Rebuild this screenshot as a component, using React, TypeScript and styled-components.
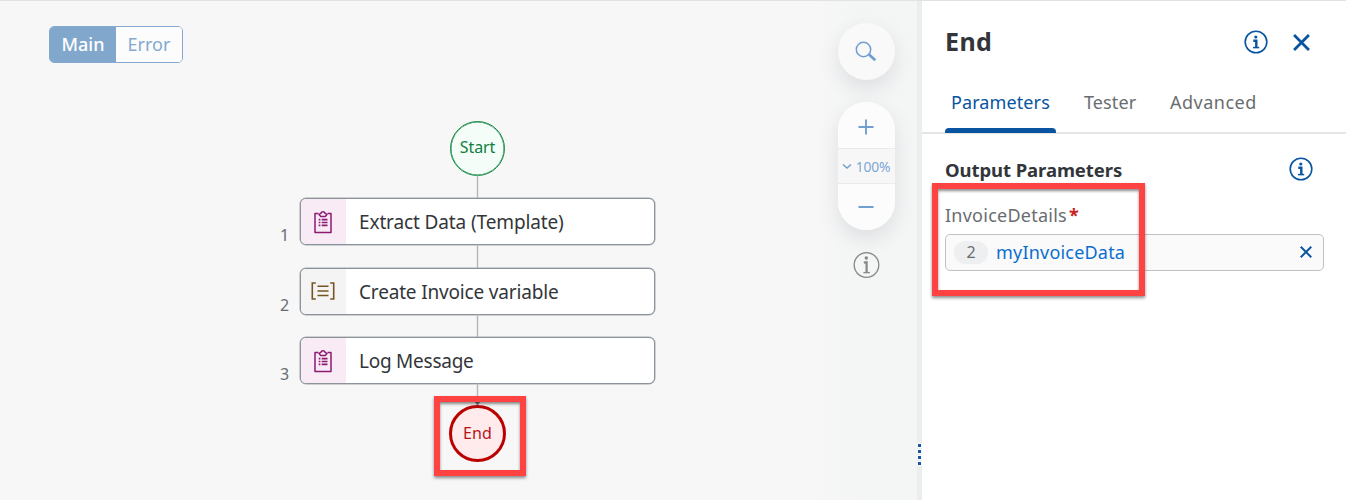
import React from "react";
import styled, { createGlobalStyle } from "styled-components";

const GlobalStyle = createGlobalStyle`
  * { box-sizing: border-box; }
  body { margin: 0; font-family: "Noto Sans", "Open Sans", sans-serif; }
`;

const Page = styled.div`
  display: flex;
  width: 1346px;
  height: 500px;
  overflow: hidden;
  border-top: 1px solid #e1e2e3;
  background: #fff;
`;

const Canvas = styled.main`
  display: flex;
  width: 917px;
  background: #f7f7f7;
`;

const ModeArea = styled.div`
  width: 300px;
  padding: 25px 0 0 49px;
`;

const ModeSwitch = styled.div`
  display: flex;
  width: 134px;
  height: 37px;
  border: 1px solid #84aad0;
  border-radius: 5px;
  overflow: hidden;
`;

const ModeButton = styled.button<{ $active?: boolean }>`
  width: 66px;
  height: 35px;
  padding: 0;
  border: 0;
  font: 18px/35px "Noto Sans", sans-serif;
  font-weight: ${(p) => (p.$active ? 500 : 400)};
  color: ${(p) => (p.$active ? "#fff" : "#84aad0")};
  background: ${(p) => (p.$active ? "#82a7cd" : "#fcfcfc")};
`;

const Flow = styled.section`
  display: flex;
  flex-direction: column;
  align-items: center;
  width: 355px;
  padding-top: 120px;
`;

const Terminal = styled.div<{ $end?: boolean }>`
  display: flex;
  flex: none;
  align-items: center;
  justify-content: center;
  width: ${(p) => (p.$end ? 57 : 55)}px;
  height: ${(p) => (p.$end ? 57 : 55)}px;
  padding-bottom: ${(p) => (p.$end ? 2 : 4)}px;
  border: ${(p) => (p.$end ? "3px solid #bb0000" : "1px solid #188a48")};
  box-shadow: ${(p) => (p.$end ? "none" : "inset 0 0 0 0.5px #188a48")};
  border-radius: 50%;
  background: ${(p) => (p.$end ? "#ffebeb" : "#f4fdf8")};
  color: ${(p) => (p.$end ? "#b4141c" : "#107e3e")};
  font-size: 16px;
  letter-spacing: ${(p) => (p.$end ? 0.1 : -0.1)}px;
`;

const EndSlot = styled.div`
  position: relative;
`;

const ArrowHead = styled.svg`
  position: absolute;
  top: -4px;
  left: 25px;
`;

const Connector = styled.div<{ $height: number }>`
  flex: none;
  width: 1px;
  height: ${(p) => p.$height}px;
  background: #b4b6b8;
  box-shadow: 0 0 0 0.3px #c8cacc;
`;

const StepRow = styled.div`
  display: flex;
  flex: none;
  width: 375px;
  height: 47px;
  margin-left: -20px;
`;

const StepNumber = styled.span`
  width: 20px;
  padding-top: 27px;
  color: #6a6d70;
  font-size: 16px;
  line-height: 20px;
`;

const StepCard = styled.div`
  display: flex;
  width: 355px;
  height: 47px;
  border: 1px solid #8c939b;
  border-radius: 6px;
  background: #fff;
  box-shadow: 0 0 0 0.5px #a5abb1;
  overflow: hidden;
`;

const StepIcon = styled.div<{ $variable?: boolean }>`
  display: flex;
  align-items: center;
  justify-content: center;
  width: 45px;
  padding: 0 1px ${(p) => (p.$variable ? 2 : 0)}px 0;
  background: ${(p) => (p.$variable ? "#f4f4f4" : "#f9ebf5")};
`;

const StepTitle = styled.div<{ $spacing: number }>`
  padding-left: 13px;
  color: #32363a;
  font-size: 19px;
  line-height: 47px;
  letter-spacing: ${(p) => p.$spacing}px;
  white-space: nowrap;
`;

const Tools = styled.aside`
  display: flex;
  flex-direction: column;
  align-items: center;
  width: 102px;
  margin-left: auto;
  padding-top: 22px;
  background: linear-gradient(90deg, #f7f7f7, #f4f5f5 40%, #f4f5f5);
`;

const RoundButton = styled.button`
  display: flex;
  flex: none;
  align-items: center;
  justify-content: center;
  width: 57px;
  height: 57px;
  padding: 0;
  border: 0;
  border-radius: 50%;
  background: #f9f9f9;
  box-shadow: 0 8px 20px rgba(60, 75, 90, 0.13);
`;

const ZoomPill = styled.div`
  display: flex;
  flex: none;
  flex-direction: column;
  width: 57px;
  height: 128px;
  margin-top: 22px;
  border-radius: 29px;
  overflow: hidden;
  background: #fcfcfc;
  box-shadow: 0 8px 20px rgba(60, 75, 90, 0.13);
`;

const ZoomPart = styled.div<{ $height: number; $middle?: boolean; $drop?: number }>`
  display: flex;
  align-items: center;
  justify-content: center;
  gap: 4px;
  height: ${(p) => p.$height}px;
  padding-top: ${(p) => p.$drop ?? 0}px;
  border: solid #e9ebec;
  border-width: ${(p) => (p.$middle ? "1px 0" : "0")};
  background: ${(p) => (p.$middle ? "#f7f7f7" : "#fcfcfc")};
  color: #7da7d4;
  font-size: 13.8px;
  letter-spacing: -0.2px;
`;

const CanvasInfo = styled.div`
  height: 28px;
  margin-top: 21px;
`;

const Splitter = styled.div`
  display: flex;
  flex-direction: column;
  align-items: center;
  gap: 3px;
  width: 5px;
  padding-top: 443px;
  background: #ebedef;
`;

const Grip = styled.i`
  width: 3px;
  height: 3px;
  background: #1557a5;
  box-shadow: 0 0 0 1px #f8fafc;
`;

const Panel = styled.aside`
  width: 424px;
  background: #fff;
`;

const PanelHeader = styled.header`
  display: flex;
  align-items: center;
  height: 82px;
  padding: 0 36px 0 23px;
`;

const PanelTitle = styled.h1`
  flex: 1;
  margin: 0 0 2px;
  color: #32363a;
  font-size: 25px;
  font-weight: 700;
  line-height: 30px;
  letter-spacing: 0.4px;
`;

const CloseSlot = styled.div`
  display: flex;
  margin-left: 25px;
`;

const TabBar = styled.nav`
  display: flex;
  height: 51px;
  padding-left: 23px;
  border-bottom: 2px solid #e5e5e5;
`;

const Tab = styled.div<{ $active?: boolean; $width: number; $spacing: number }>`
  display: flex;
  flex-direction: column;
  justify-content: space-between;
  width: ${(p) => p.$width}px;
  height: 50px;
  padding-left: 6px;
  color: ${(p) => (p.$active ? "#0854a0" : "#6a6d70")};
  font-size: 18px;
  line-height: 39px;
  letter-spacing: ${(p) => p.$spacing}px;
  white-space: nowrap;
`;

const TabMarker = styled.div`
  flex: none;
  width: 111px;
  height: 5px;
  margin-left: -6px;
  border-radius: 4px 4px 0 0;
  background: #0854a0;
`;

const PanelBody = styled.div`
  padding: 22px 22px 0 23px;
`;

const SectionHeader = styled.div`
  display: flex;
  align-items: center;
  justify-content: space-between;
  height: 26px;
  padding-right: 11px;
`;

const SectionTitle = styled.h2`
  margin: 0;
  color: #32363a;
  font-size: 18.5px;
  font-weight: 700;
  letter-spacing: -0.08px;
`;

const Field = styled.div`
  position: relative;
  padding-top: 20px;
  margin-top: 1px;
`;

const FieldLabel = styled.div`
  height: 31px;
  color: #6a6d70;
  font-size: 18px;
  line-height: 25px;
  letter-spacing: 0.25px;
`;

const Required = styled.span`
  margin-left: 2px;
  color: #cc1f1f;
  font-weight: 700;
`;

const ValueBox = styled.div`
  display: flex;
  align-items: center;
  width: 379px;
  height: 37px;
  padding: 0 11px 1px 8px;
  border: 1px solid #bfc1c2;
  border-radius: 5px;
  background: #fafafa;
`;

const SourceBadge = styled.span`
  width: 34px;
  height: 23px;
  border-radius: 12px;
  background: #edeff0;
  color: #6a6d70;
  font-size: 16px;
  line-height: 23px;
  text-align: center;
`;

const ValueName = styled.span`
  flex: 1;
  padding: 0 0 1px 8px;
  color: #0a6ed1;
  font-size: 18px;
  line-height: 26px;
  letter-spacing: 0.2px;
`;

const Highlight = styled.div<{ $x: number; $y: number; $w: number; $h: number }>`
  position: absolute;
  left: ${(p) => p.$x}px;
  top: ${(p) => p.$y}px;
  width: ${(p) => p.$w}px;
  height: ${(p) => p.$h}px;
  border: 6px solid #ff4343;
  box-shadow: 0 2px 3px rgba(0, 0, 0, 0.45), inset 0 2px 3px rgba(0, 0, 0, 0.45);
`;

const ClipboardIcon = () => (
  <svg width="18" height="24" viewBox="0 0 18 24" fill="none" stroke="#8b1a72" strokeWidth="1.5" strokeLinejoin="round">
    <path d="M4.5 3.6H1v19h16v-19h-3.5" />
    <path d="M5 4.6L7 3.2a2.1 2.1 0 0 1 4 0l2 1.4-1.8 1.9H6.8z" />
    <path d="M4.7 9.6h1.7M4.7 12.5h1.7M4.7 15.4h1.7M7.7 9.6h5.8M7.7 12.5h5.8M7.7 15.4h5.8" strokeWidth="1.7" />
  </svg>
);

const VariableIcon = () => (
  <svg width="24" height="18" viewBox="0 0 24 18" fill="none" stroke="#765522" strokeWidth="1.6">
    <path d="M4.8 1H1.3v16h3.5M19.2 1h3.5v16h-3.5M6.5 4.2h11M6.5 9h11M6.5 13.5h11" />
  </svg>
);

const InfoIcon = () => (
  <svg width="24" height="24" viewBox="0 0 24 24" fill="none" stroke="#0854a0" strokeWidth="1.6">
    <circle cx="12" cy="12" r="10.8" />
    <circle cx="11.8" cy="7" r="1.6" fill="#0854a0" stroke="none" />
    <path d="M9.3 10.7h3v6.8" strokeWidth="2.4" />
    <path d="M9 17.6h6.2" strokeWidth="1.5" />
  </svg>
);

const CanvasInfoIcon = () => (
  <svg width="27" height="28" viewBox="0 0 27 28" fill="none" stroke="#85878a" strokeWidth="1.3">
    <circle cx="13.5" cy="14" r="12.3" />
    <circle cx="13.3" cy="7" r="1.7" fill="#85878a" stroke="none" />
    <path d="M10.8 11.7l2.8-.5v10" strokeWidth="2.2" />
    <path d="M10.4 21.6h6.5" />
  </svg>
);

const CloseIcon = ({ size }: { size: number }) => (
  <svg width={size} height={size} viewBox="0 0 16 16" stroke="#0854a0" strokeWidth="2.6">
    <path d="M1 1l14 14M15 1L1 15" />
  </svg>
);

const steps = [
  { title: "Extract Data (Template)", spacing: -0.12, variable: false, gap: 23 },
  { title: "Create Invoice variable", spacing: -0.17, variable: true, gap: 22 },
  { title: "Log Message", spacing: -0.25, variable: false, gap: 21 },
];

export default function App() {
  return (
    <>
      <GlobalStyle />
      <Page>
        <Canvas>
          <ModeArea>
            <ModeSwitch>
              <ModeButton $active>Main</ModeButton>
              <ModeButton>Error</ModeButton>
            </ModeSwitch>
          </ModeArea>
          <Flow>
            <Terminal>Start</Terminal>
            <Connector $height={22} />
            {steps.map((step, index) => (
              <React.Fragment key={step.title}>
                <StepRow>
                  <StepNumber>{index + 1}</StepNumber>
                  <StepCard>
                    <StepIcon $variable={step.variable}>
                      {step.variable ? <VariableIcon /> : <ClipboardIcon />}
                    </StepIcon>
                    <StepTitle $spacing={step.spacing}>{step.title}</StepTitle>
                  </StepCard>
                </StepRow>
                <Connector $height={step.gap} />
              </React.Fragment>
            ))}
            <EndSlot>
              <Terminal $end>End</Terminal>
              <ArrowHead width="7" height="5" viewBox="0 0 7 5" fill="#77797c">
                <path d="M0 0h7L3.5 4.5z" />
              </ArrowHead>
              <Highlight $x={-15} $y={-9} $w={92} $h={80} />
            </EndSlot>
          </Flow>
          <Tools>
            <RoundButton aria-label="Search">
              <svg width="22" height="22" viewBox="0 0 22 22" fill="none" stroke="#6f9fd2">
                <circle cx="8.5" cy="8.5" r="7.2" strokeWidth="1.5" />
                <path d="M13.7 13.2l6.6 6" strokeWidth="2.8" />
              </svg>
            </RoundButton>
            <ZoomPill>
              <ZoomPart $height={46} $drop={4}>
                <svg width="16" height="16" viewBox="0 0 16 16" stroke="#709fd0" strokeWidth="1.9">
                  <path d="M8 .5v15M.5 8h15" />
                </svg>
              </ZoomPart>
              <ZoomPart $height={36} $middle>
                <svg width="10" height="6" viewBox="0 0 10 6" fill="none" stroke="#709fd0" strokeWidth="1.4">
                  <path d="M1 1.5l4 3.5 4-3.5" />
                </svg>
                <span>100%</span>
              </ZoomPart>
              <ZoomPart $height={46}>
                <svg width="16" height="16" viewBox="0 0 16 16" stroke="#709fd0" strokeWidth="2">
                  <path d="M.5 8h15" />
                </svg>
              </ZoomPart>
            </ZoomPill>
            <CanvasInfo>
              <CanvasInfoIcon />
            </CanvasInfo>
          </Tools>
        </Canvas>
        <Splitter>
          <Grip /><Grip /><Grip /><Grip />
        </Splitter>
        <Panel>
          <PanelHeader>
            <PanelTitle>End</PanelTitle>
            <InfoIcon />
            <CloseSlot><CloseIcon size={17} /></CloseSlot>
          </PanelHeader>
          <TabBar>
            <Tab $active $width={133} $spacing={0.1}>Parameters<TabMarker /></Tab>
            <Tab $width={86} $spacing={0.1}>Tester</Tab>
            <Tab $width={110} $spacing={0.5}>Advanced</Tab>
          </TabBar>
          <PanelBody>
            <SectionHeader>
              <SectionTitle>Output Parameters</SectionTitle>
              <InfoIcon />
            </SectionHeader>
            <Field>
              <FieldLabel>InvoiceDetails<Required>*</Required></FieldLabel>
              <ValueBox>
                <SourceBadge>2</SourceBadge>
                <ValueName>myInvoiceData</ValueName>
                <CloseIcon size={12} />
              </ValueBox>
              <Highlight $x={-13} $y={0} $w={213} $h={113} />
            </Field>
          </PanelBody>
        </Panel>
      </Page>
    </>
  );
}
